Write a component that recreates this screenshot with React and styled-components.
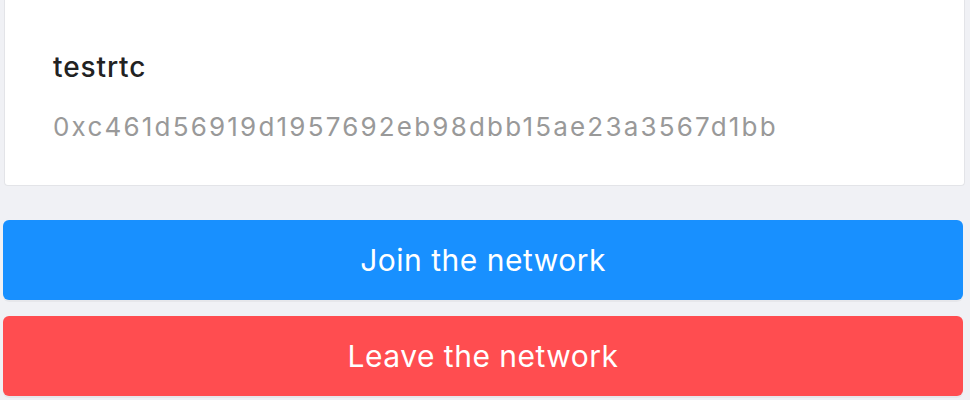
import React from "react";
import styled, { createGlobalStyle } from "styled-components";

const Global = createGlobalStyle`
  html, body { margin: 0; padding: 0; background: #f0f1f5; }
  body { font-family: Inter, "Noto Sans", sans-serif; -webkit-font-smoothing: antialiased; }
`;

const Page = styled.div`
  display: flex;
  flex-direction: column;
  padding: 0 7px 0 3px;
  height: 400px;
  overflow: hidden;
`;

const Card = styled.div`
  background: #fff;
  border: 1px solid #e3e4e8;
  border-top: none;
  border-radius: 0 0 4px 4px;
  margin: 0 -2px 0 1px;
  padding: 49px 48px 40px;
  display: flex;
  flex-direction: column;
  gap: 24px;
`;

const Title = styled.div`
  font-size: 28px;
  line-height: 36px;
  color: #222;
  font-weight: 500;
  letter-spacing: 0.9px;
`;

const Address = styled.div`
  font-size: 26px;
  line-height: 36px;
  color: #999;
  letter-spacing: 2.2px;
`;

const Actions = styled.div`
  display: flex;
  flex-direction: column;
  gap: 16px;
  margin-top: 34px;
`;

const Button = styled.button`
  height: 80px;
  border: none;
  border-radius: 6px;
  background: ${(p) => (p.$danger ? "#ff4d50" : "#1890ff")};
  color: #fff;
  font-family: Inter, "Noto Sans", sans-serif;
  font-size: 30px;
  letter-spacing: 0.5px;
  font-weight: 400;
  box-shadow: 0 2px 0 rgba(0, 0, 0, 0.04);
  cursor: pointer;
`;

export default function App() {
  return (
    <>
      <Global />
      <Page>
        <Card>
          <Title>testrtc</Title>
          <Address>0xc461d56919d1957692eb98dbb15ae23a3567d1bb</Address>
        </Card>
        <Actions>
          <Button>Join the network</Button>
          <Button $danger>Leave the network</Button>
        </Actions>
      </Page>
    </>
  );
}
